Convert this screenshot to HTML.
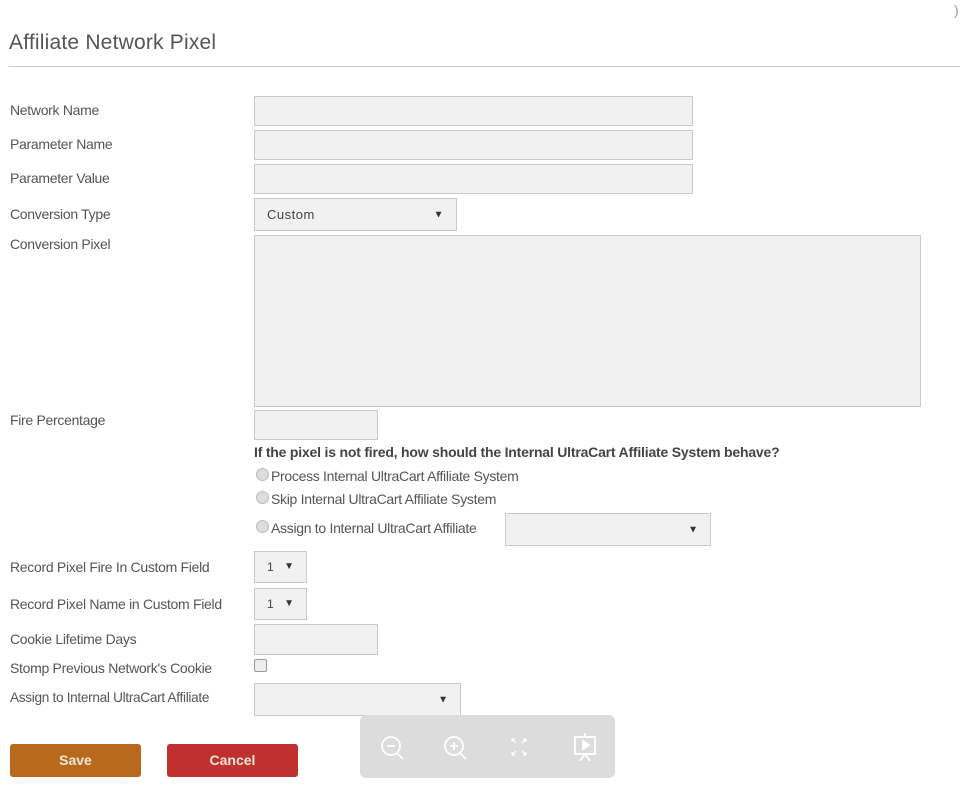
<!DOCTYPE html>
<html><head><style>
body{margin:0;width:960px;height:798px;background:#fff;font-family:"Liberation Sans",sans-serif;position:relative;overflow:hidden;color:#555}
.a{position:absolute}
.l{position:absolute;left:10px;font-size:14px;color:#555;letter-spacing:-0.3px}
.i{position:absolute;left:254px;background:#f1f1f1;border:1px solid #c9c9c9;box-sizing:border-box}
.s:after{content:"▼";position:absolute;right:12px;top:50%;transform:translateY(-50%);font-size:10px;color:#333}
.r{position:absolute;left:256px;font-size:14px;color:#555;letter-spacing:-0.3px}
.r:before{content:"";display:inline-block;width:11px;height:11px;border-radius:50%;background:#ddd;border:1px solid #bbb;margin-right:2px;vertical-align:0px}
.b{position:absolute;top:744px;height:33px;width:131px;border-radius:3px;color:#f3e6d6;font-weight:bold;font-size:14px;text-align:center;line-height:33px}
</style></head><body>
<div class="a" style="left:954px;top:2px;font-size:14px;color:#999">)</div>
<div class="a" style="left:9px;top:31px;font-size:21px;color:#555;letter-spacing:0.2px">Affiliate Network Pixel</div>
<div class="a" style="left:9px;top:66px;width:951px;height:1px;background:#c8c8c8"></div>

<div class="l" style="top:102px">Network Name</div>
<div class="i" style="top:96px;width:439px;height:30px"></div>
<div class="l" style="top:136px">Parameter Name</div>
<div class="i" style="top:130px;width:439px;height:30px"></div>
<div class="l" style="top:170px">Parameter Value</div>
<div class="i" style="top:164px;width:439px;height:30px"></div>
<div class="l" style="top:206px">Conversion Type</div>
<div class="i s" style="top:198px;width:203px;height:33px;font-size:13px;line-height:31px;padding-left:12px;color:#444;letter-spacing:0.5px">Custom</div>
<div class="l" style="top:236px">Conversion Pixel</div>
<div class="i" style="top:235px;width:667px;height:172px"></div>
<div class="l" style="top:412px">Fire Percentage</div>
<div class="i" style="top:410px;width:124px;height:30px"></div>
<div class="a" style="left:254px;top:444px;font-size:14px;font-weight:bold;color:#444;letter-spacing:-0.2px">If the pixel is not fired, how should the Internal UltraCart Affiliate System behave?</div>
<div class="r" style="top:468px">Process Internal UltraCart Affiliate System</div>
<div class="r" style="top:491px">Skip Internal UltraCart Affiliate System</div>
<div class="r" style="top:520px">Assign to Internal UltraCart Affiliate</div>
<div class="i s" style="left:505px;top:513px;width:206px;height:33px"></div>

<div class="l" style="top:559px">Record Pixel Fire In Custom Field</div>
<div class="i s" style="top:551px;width:53px;height:32px;font-size:12px;line-height:30px;padding-left:12px;color:#444">1</div>
<div class="l" style="top:596px">Record Pixel Name in Custom Field</div>
<div class="i s" style="top:588px;width:53px;height:32px;font-size:12px;line-height:30px;padding-left:12px;color:#444">1</div>
<div class="l" style="top:631px">Cookie Lifetime Days</div>
<div class="i" style="top:624px;width:124px;height:31px"></div>
<div class="l" style="top:660px">Stomp Previous Network's Cookie</div>
<div class="i" style="top:659px;width:13px;height:13px;border-radius:2px;background:#eee;border-color:#999"></div>
<div class="l" style="top:690px;font-size:13.6px">Assign to Internal UltraCart Affiliate</div>
<div class="i s" style="top:683px;width:207px;height:33px"></div>

<div class="b" style="left:10px;background:#b9691b">Save</div>
<div class="b" style="left:167px;background:#c0302f">Cancel</div>

<div class="a" style="left:360px;top:715px;width:255px;height:63px;background:#dcdcdc;border-radius:6px">
<svg width="255" height="63" fill="none" stroke="#fff" stroke-width="1.8">
<circle cx="31" cy="31" r="9"/><path d="M37 38l6 6M27 31h8"/>
<circle cx="94" cy="31" r="9"/><path d="M100 38l6 6M90 31h8M94 27v8"/>
<path d="M152 24l4 4M152 24h3M152 24v3M166 24l-4 4M166 24h-3M166 24v3M152 40l4-4M152 40h3M152 40v-3M166 40l-4-4M166 40h-3M166 40v-3" stroke-width="1.3"/>
<rect x="215" y="22" width="20" height="17"/><path d="M223 26l6 4-6 4z" fill="#fff"/><path d="M225 18v4M225 39l-5 7M225 39l5 7"/>
</svg></div>
</body></html>
